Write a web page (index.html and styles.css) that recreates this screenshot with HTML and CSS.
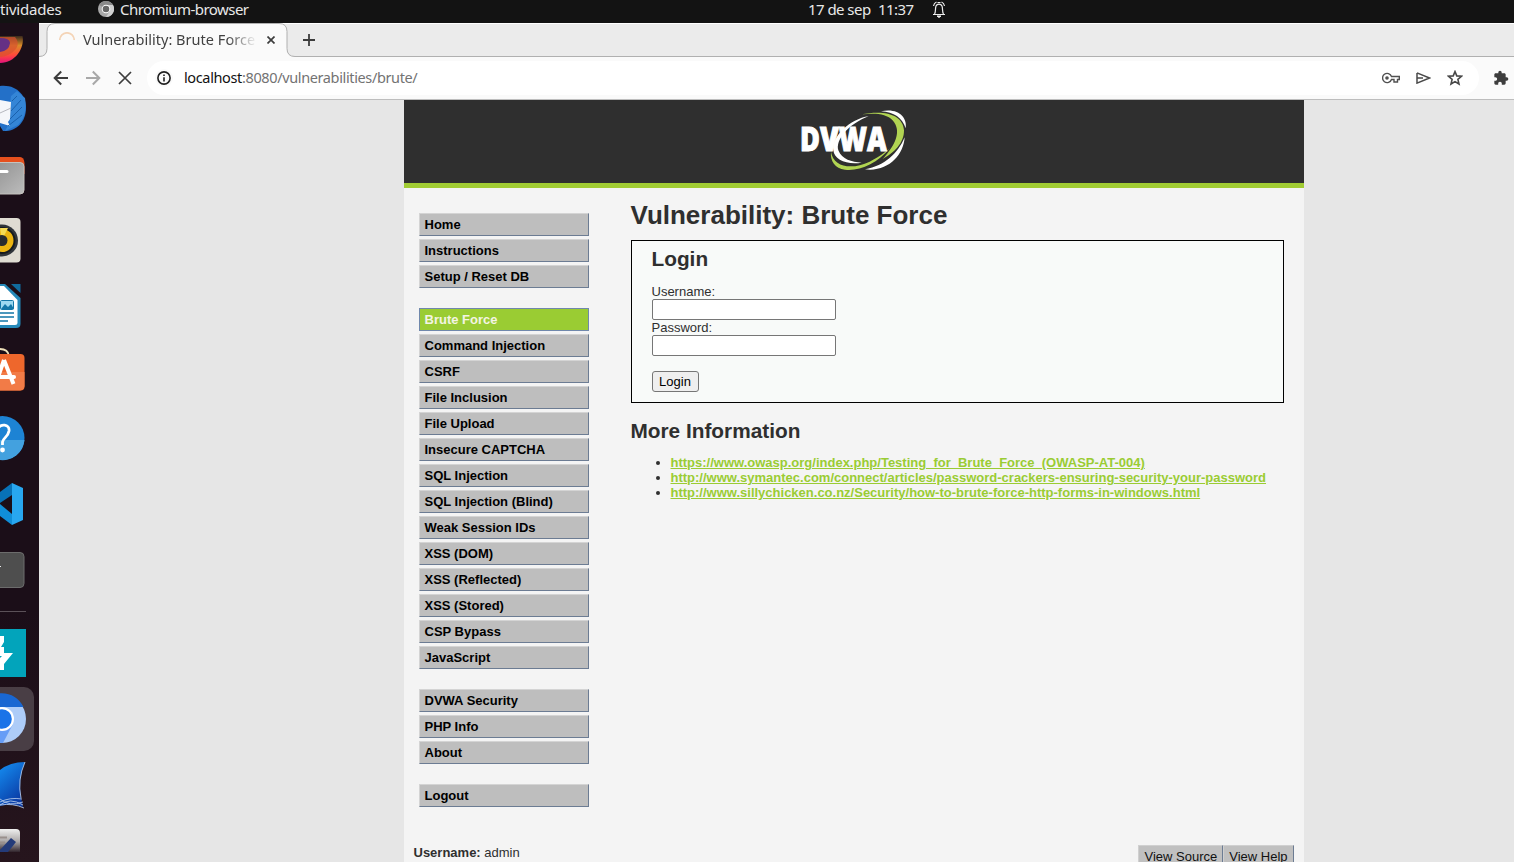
FILE: index.html
```
<!DOCTYPE html>
<html lang="es">
<head>
<meta charset="utf-8">
<title>Vulnerability: Brute Force</title>
<link rel="stylesheet" href="styles.css">
</head>
<body>
<div class="desktop">
  <div class="topbar">
    <span class="activities">tividades</span>
    <svg class="app-icon" width="16" height="16" viewBox="0 0 16 16"><circle cx="8" cy="8" r="8" fill="#a9a9a9"/><path d="M8 8L1 4A8 8 0 0 1 15 4Z" fill="#8a8a8a"/><path d="M8 16A8 8 0 0 0 15 4H8L12 10Z" fill="#d0d0d0"/><circle cx="8" cy="8" r="4.3" fill="#fff"/><circle cx="8" cy="8" r="3.3" fill="#666"/></svg>
    <span class="app-name">Chromium-browser</span>
    <span class="clock-date">17 de sep</span>
    <span class="clock-time">11:37</span>
    <svg class="bell" width="14" height="18" viewBox="0 0 14 18" fill="none" stroke="#eee"><path d="M1 14.500H13M2.500 14C4 12 3 9 4 6C5 3.500 9 3.500 10 6C11 9 10 12 11.500 14M1.500 6Q2 3 4.500 2M12.500 6Q12 3 9.500 2M5.500 2.500H8.500" stroke-width="1.200"/><path d="M5 16H9L7 17.500Z" fill="#fff"/></svg>
  </div>
  <div class="workspace">
    <div class="dock">
      <svg class="slot slot-first" viewBox="0 13 39 53"><defs><linearGradient id="ff" x1="0" y1="0" x2="0" y2="1"><stop offset="0" stop-color="#3b2b1d"/><stop offset=".35" stop-color="#d98b28"/><stop offset=".7" stop-color="#ff4a3a"/><stop offset="1" stop-color="#e5127d"/></linearGradient></defs><path d="M0 26H22.500C25 38 15 53 0 53Z" fill="url(#ff)"/><path d="M0 27H15C23 36 12 46 0 47Z" fill="#d9512f" opacity=".7"/><path d="M0 28Q10 28 10 33Q9 41 0 42Z" fill="#653085"/></svg>
      <svg class="slot" viewBox="0 0 39 66"><path d="M0 10C17 8 26 20 26 32C26 47 15 56 3 55L0 50Z" fill="#2370c8"/><path d="M11 20L17 15L25 22Q28 39 18 49L5 55L10 46L8 44Z" fill="#3485d6"/><path d="M0 24L11 26L10 43L8 46L10 50L0 47Z" fill="#f5f6fa"/><path d="M0 37L11 32" stroke="#a6a7ae" stroke-width=".8"/><path d="M12 25L17 20M11 35L21 24M10 43L22 31M8 50L22 39" stroke="#1960ac" stroke-width="1"/></svg>
      <svg class="slot" viewBox="0 0 39 66"><defs><linearGradient id="fg" x1="0" y1="0" x2="1" y2="1"><stop stop-color="#8d8d8d"/><stop offset="1" stop-color="#bcbcbc"/></linearGradient></defs><path d="M0 15H20Q24 15 24.500 21V32H0Z" fill="#e6501e"/><rect x="-12" y="20.500" width="36" height="31.500" rx="4" fill="url(#fg)" stroke="#c5c2be"/><path d="M0 29.500H7" stroke="#fff" stroke-width="3" stroke-linecap="round"/></svg>
      <svg class="slot" viewBox="0 0 39 66"><rect x="-18" y="10" width="38.500" height="44.500" rx="4" fill="#dfdcd2"/><circle cx="2" cy="32.500" r="16" fill="#30353a"/><circle cx="2" cy="32.500" r="12.500" fill="#ecb511" stroke="#161b1e" stroke-width="2"/><path d="M2 32L0 20H8Z" fill="#f7dc54"/><circle cx="2" cy="32.500" r="5.500" fill="#292c2e"/></svg>
      <svg class="slot" viewBox="0 0 39 66"><path d="M0 10H5L20.500 24V50Q20.500 54 16 54H0Z" fill="#2589b9"/><path d="M0 12H4L17.500 26V49Q17.500 51 15 51H0Z" fill="#fff"/><path d="M11 10H20.500V19Z" fill="#116b9d"/><rect x=".5" y="26.500" width="13" height="9" rx="1" fill="#9bd8f0" stroke="#1276a7"/><path d="M1 35L5 30L8 33L11 30L14 35Z" fill="#1276a7"/><path d="M0 39H14M0 43H14M0 47H8" stroke="#1276a7" stroke-width="1.700"/></svg>
      <svg class="slot" viewBox="0 0 39 66"><path d="M0 9Q8 9 9 16" fill="none" stroke="#eee0b9" stroke-width="1.800"/><rect x="-15" y="14" width="39.500" height="36.500" rx="4" fill="#ee672c"/><path d="M0 32H24.500V46Q24 50 20 50.500H0Z" fill="#f27b47"/><path d="M4 20L13.500 44M4 20L-3 40" stroke="#fff" stroke-width="4"/><path d="M0 37H14" stroke="#fff" stroke-width="4" stroke-linecap="round"/></svg>
      <svg class="slot" viewBox="0 0 39 66"><circle cx="2.500" cy="32" r="22" fill="#1d83d4"/><path d="M0 34H24.500A22 22 0 0 1 0 54Z" fill="#43a1df"/><path d="M-2 23C0 17 10 18 9 25C8 31 3 32 2.500 36V39" fill="none" stroke="#fff" stroke-width="2.800"/><circle cx="2.500" cy="44" r="2.400" fill="#fff"/></svg>
      <svg class="slot" viewBox="0 0 39 66"><path d="M12 11L0 20V31L12 23Z" fill="#0872b7"/><path d="M0 32L12 42V53L0 44Z" fill="#108ed8"/><path d="M12 11L23 16V48L12 53Z" fill="#28a7f0"/></svg>
      <svg class="slot" viewBox="0 0 39 66"><rect x="-14" y="14.500" width="38" height="35" rx="4" fill="#4e4e4e" stroke="#6c6c6c"/><path d="M0 28.500H1" stroke="#eee"/></svg>
      <div class="dock-line"></div>
      <svg class="slot" viewBox="0 0 39 66"><path d="M0 9H26V57H0Z" fill="#02a4bb"/><path d="M0 16H4V22L1 27H4V33H13L4 44V50H0V38L2 36H0Z" fill="#fff"/></svg>
      <svg class="slot" viewBox="0 0 39 66"><rect x="-20" y="1" width="54" height="64" rx="10" fill="#493e45"/><circle cx="2" cy="33" r="24" fill="#adccf8"/><path d="M-20 21A24 24 0 0 1 23.500 21Z" fill="#1967d2"/><path d="M0 43L13 38L3 57H0Z" fill="#669df6"/><circle cx="2" cy="33" r="12" fill="#fff"/><circle cx="2" cy="33" r="9.800" fill="#1a73e8"/></svg>
      <svg class="slot" viewBox="0 0 39 66"><defs><linearGradient id="ws" x1="0" y1="0" x2=".5" y2="1"><stop stop-color="#1590f4"/><stop offset="1" stop-color="#0a3ba5"/></linearGradient></defs><path d="M0 18Q10 10 25 10Q18 25 21 46L23 55Q12 51 0 54Z" fill="url(#ws)"/><path d="M25 10Q17 28 21 46M0 50Q10 45 22 47M0 53Q10 45 23 53M0 47Q9 55 23 50M0 53Q13 51 24 56" fill="none" stroke="#c2d3ef" stroke-width=".8"/></svg>
      <svg class="slot slot-last" viewBox="0 0 39 44"><defs><linearGradient id="ed" x1="0" y1="0" x2="0" y2="1"><stop stop-color="#f0f0ef"/><stop offset=".55" stop-color="#aaa6a6"/><stop offset="1" stop-color="#30242c"/></linearGradient></defs><path d="M0 11H16Q20 11 20 15V34H0Z" fill="url(#ed)"/><path d="M0 19.500H7M0 24.500H5" stroke="#99908c" stroke-width="2"/><path d="M0 32L11 20L16 24L8 34H0Z" fill="#243b79"/></svg>
    </div>
    <div class="browser">
      <div class="tabstrip">
        <svg class="tab-shape" width="257" height="34" viewBox="0 0 257 34"><path d="M0 34V33.500Q8 33.500 8 25.500V8.500Q8 .5 16 .5H240Q248 .5 248 8.500V25.500Q248 33.500 256 33.500V34Z" fill="#fafafa"/><path d="M0 33.500Q8 33.500 8 25.500V8.500Q8 .5 16 .5H240Q248 .5 248 8.500V25.500Q248 33.500 256 33.500" fill="none" stroke="#b0b0b0"/></svg>
        <svg class="spinner" width="16" height="16" viewBox="0 0 16 16"><path d="M.8 8A7.200 7.200 0 0 1 15.200 8" fill="none" stroke="#f4d4b7" stroke-width="1.700"/></svg>
        <span class="tab-title">Vulnerability: Brute Force</span>
        <svg class="tab-close" width="8" height="8" viewBox="0 0 8 8"><path d="M.5 .5L7.500 7.500M7.500 .5L.5 7.500" stroke="#3d3d3d" stroke-width="1.700"/></svg>
        <svg class="tab-new" width="12" height="12" viewBox="0 0 12 12"><path d="M6 0V12M0 6H12" stroke="#3c3c3c" stroke-width="1.800"/></svg>
      </div>
      <div class="toolbar">
        <svg class="nav-icon" viewBox="0 0 16 16"><path d="M15 8H2M8.200 1.500L1.700 8L8.200 14.500" fill="none" stroke="#3d3d3d" stroke-width="2"/></svg>
        <svg class="nav-icon" viewBox="0 0 16 16"><path d="M1 8H14M7.800 1.500L14.300 8L7.800 14.500" fill="none" stroke="#a8a8a8" stroke-width="2"/></svg>
        <svg class="nav-icon nav-stop" viewBox="0 0 16 16"><path d="M2 2L14 14M14 2L2 14" stroke="#3d3d3d" stroke-width="1.700"/></svg>
        <div class="omnibox">
          <span class="info-wrap"><svg width="14" height="14" viewBox="0 0 14 14"><circle cx="7" cy="7" r="6.100" fill="none" stroke="#202020" stroke-width="1.600"/><path d="M7 6.200V10.500M7 3.500V5" stroke="#202020" stroke-width="1.600"/></svg></span>
          <span class="url"><b>localhost</b>:8080/vulnerabilities/brute/</span>
          <svg class="key" width="18" height="12" viewBox="0 0 18 12"><path d="M9.500 4.500A4.600 4.600 0 1 0 9.500 7.500H12V10H15.500V7.500H17.300V4.500Z" fill="none" stroke="#505050" stroke-width="1.400"/><circle cx="5" cy="6" r="1.800" fill="#505050"/></svg>
          <svg class="send" width="15" height="12" viewBox="0 0 15 12"><path d="M1 .9L13.500 6L1 11.100V.9M1 6H7" fill="none" stroke="#4a4a4a" stroke-width="1.500"/></svg>
          <svg class="star" width="16" height="16" viewBox="0 0 16 16"><path d="M8 1.600L9.800 5.900L14.500 6.300L10.900 9.400L12 14L8 11.600L4 14L5.100 9.400L1.500 6.300L6.200 5.900Z" fill="none" stroke="#484848" stroke-width="1.600"/></svg>
        </div>
        <svg class="puzzle" width="16" height="16" viewBox="0 0 24 24"><path d="M20.500 11H19V7c0-1.100-.9-2-2-2h-4V3.500a2.500 2.500 0 0 0-5 0V5H4c-1.100 0-2 .9-2 2v3.800h1.500c1.500 0 2.700 1.200 2.700 2.700s-1.200 2.700-2.700 2.700H2V20c0 1.100.9 2 2 2h3.800v-1.500c0-1.500 1.200-2.700 2.700-2.700s2.700 1.200 2.700 2.700V22H17c1.100 0 2-.9 2-2v-4h1.500a2.500 2.500 0 0 0 0-5z" fill="#3d3d3d"/></svg>
      </div>
      <div class="viewport">
        <div class="container">
          <header class="header">
            <svg class="logo" viewBox="-78 300 600 249" width="200" height="83">
              <path d="M303 334C355 322 383 353 377 385C367 353 342 337 303 334Z" fill="#fff"/>
              <path d="M374 412C371 465 324 517 255 508C315 498 355 458 374 412Z" fill="#fff"/>
              <path d="M266 349C204 373 166 420 175 451C186 479 215 486 245 488C201 495 162 480 160 450C154 412 210 356 266 349Z" fill="#fff"/>
              <path d="M244 343C315 329 369 344 372 391C373 429 341 460 308 477C347 434 365 393 339 362C318 340 287 339 244 343Z" fill="#b1d452"/>
              <path d="M153 455C160 501 214 511 269 485C298 470 317 456 329 445C292 492 238 514 195 509C165 505 150 483 153 455Z" fill="#b1d452"/>
              <text class="logo-text logo-outline" x="60" y="454" textLength="260" lengthAdjust="spacingAndGlyphs">DVWA</text>
            </svg>
          </header>
          <div class="columns">
            <nav class="menu">
              <ul><li>Home</li><li>Instructions</li><li>Setup / Reset DB</li></ul>
              <ul><li class="selected">Brute Force</li><li>Command Injection</li><li>CSRF</li><li>File Inclusion</li><li>File Upload</li><li>Insecure CAPTCHA</li><li>SQL Injection</li><li>SQL Injection (Blind)</li><li>Weak Session IDs</li><li>XSS (DOM)</li><li>XSS (Reflected)</li><li>XSS (Stored)</li><li>CSP Bypass</li><li>JavaScript</li></ul>
              <ul><li>DVWA Security</li><li>PHP Info</li><li>About</li></ul>
              <ul><li>Logout</li></ul>
            </nav>
            <main class="main">
              <h1>Vulnerability: Brute Force</h1>
              <form class="login-box">
                <h2>Login</h2>
                <label for="user">Username:</label>
                <input id="user" type="text">
                <label for="pass">Password:</label>
                <input id="pass" type="password">
                <button type="button">Login</button>
              </form>
              <h2>More Information</h2>
              <ul class="links">
                <li><a href="#">https://www.owasp.org/index.php/Testing_for_Brute_Force_(OWASP-AT-004)</a></li>
                <li><a href="#">http://www.symantec.com/connect/articles/password-crackers-ensuring-security-your-password</a></li>
                <li><a href="#">http://www.sillychicken.co.nz/Security/how-to-brute-force-http-forms-in-windows.html</a></li>
              </ul>
            </main>
          </div>
          <footer class="footer">
            <div><b>Username:</b> admin</div>
            <div class="footer-buttons"><span>View Source</span><span>View Help</span></div>
          </footer>
        </div>
      </div>
    </div>
  </div>
</div>
</body>
</html>
```
FILE: styles.css
```
* { box-sizing: border-box; }
body { margin: 0; overflow: hidden; background: #e6e6e6; }
svg { display: block; flex: none; }
ul { margin: 0; padding: 0; list-style: none; }

.desktop { width: 1514px; height: 862px; display: flex; flex-direction: column; overflow: hidden; }
.topbar {
  height: 23px; flex: none; display: flex; align-items: flex-start;
  background: #131313; color: #e8e8e8;
  font: 15px/19px "Noto Sans", sans-serif; white-space: nowrap;
}
.activities { width: 98px; letter-spacing: -0.2px; }
.app-icon { margin-top: 1px; }
.app-name { width: 688px; margin-left: 6px; letter-spacing: -0.55px; }
.clock-date { width: 70px; letter-spacing: -0.55px; line-height: 18px; }
.clock-time { width: 54px; letter-spacing: -0.55px; line-height: 18px; }
.workspace { flex: 1; min-height: 0; display: flex; }

.dock { width: 39px; flex: none; background: linear-gradient(#1b0e18, #1b0e18 70%, #26151d); overflow: hidden; }
.slot { width: 39px; height: 66px; }
.slot-first { height: 53px; }
.slot-last { height: 44px; }
.dock-line { width: 26px; height: 1px; margin: 7px 0 8px; background: #5b5158; }

.browser { flex: 1; min-width: 0; display: flex; flex-direction: column; }
.tabstrip {
  height: 34px; flex: none; display: flex; align-items: center; position: relative;
  background: #ebebeb; border-top: 1px solid #fff; border-bottom: 1px solid #b0b0b0;
}
.tab-shape { position: absolute; left: 0; top: -1px; }
.spinner, .tab-title, .tab-close { position: relative; }
.spinner { margin-left: 20px; }
.tab-title {
  width: 174px; margin: 0 0 2px 8px; overflow: hidden; white-space: nowrap;
  font: 14.500px/20px "Noto Sans", sans-serif; letter-spacing: 0.03px; color: #414141;
  -webkit-mask-image: linear-gradient(90deg, #000 144px, transparent 174px);
  mask-image: linear-gradient(90deg, #000 144px, transparent 174px);
}
.tab-close { margin-left: 10px; }
.tab-new { margin-left: 28px; }
.toolbar {
  height: 43px; flex: none; display: flex; align-items: center;
  background: #fafafa; border-bottom: 1px solid #bdbdbd; padding-left: 14px;
}
.nav-icon { width: 16px; height: 16px; margin-right: 16px; }
.nav-stop { margin-right: 14px; }
.omnibox {
  width: 1332px; height: 34px; flex: none; border-radius: 17px; background: #fff;
  display: flex; align-items: center; padding-left: 8px;
}
.info-wrap { width: 18px; height: 18px; border-radius: 50%; background: #fafafa; display: grid; place-items: center; }
.url { flex: 1; margin: 0 0 2px 11px; font: 14.500px/20px "Noto Sans", sans-serif; letter-spacing: -0.37px; color: #737373; }
.url b { font-weight: 400; color: #111; }
.send { margin-left: 16px; }
.star { margin: 0 16px 0 16px; }
.puzzle { margin-left: 14px; }

.viewport { flex: 1; min-height: 0; background: #e6e6e6; padding-left: 364.5px; overflow: hidden; font: 13px/15px "Liberation Sans", Arial, sans-serif; color: #2f2f2f; }
.container { width: 900px; height: 800px; background: #f4f4f4; }
.header { height: 88px; background: #2f2f2f; border-bottom: 5px solid #a1cc33; display: flex; justify-content: center; }
.logo-text { font: 800 99px "Open Sans", sans-serif; fill: #fff; }
.logo-outline { stroke: #fff; stroke-width: 3px; }
.columns { height: 657px; display: flex; }
.menu { width: 227px; padding: 25px 0 0 15px; }
.menu ul { margin-bottom: 20px; }
.menu li {
  width: 170px; height: 23px; margin-bottom: 3px; padding: 3px 4px 0 5px;
  font-weight: 700; color: #000; background: #bebebe;
  border: 1px solid; border-color: #d4d4d4 #6c7c93 #6c7c93 #d4d4d4;
}
.menu li:last-child { margin-bottom: 0; }
.menu li.selected { background: #9acc33; color: #f4f4e4; border-color: #7088ac; }
.main { width: 653px; padding-top: 12px; }
h1, h2 { margin: 0; color: #2f2f2f; }
h1 { font-size: 26px; line-height: 30px; }
h2 { font-size: 20.800px; line-height: 24px; }
.login-box {
  height: 163px; margin: 10px 0 16px; padding: 6px 20px 0; display: flex; flex-direction: column; align-items: flex-start;
  background: #f8faf9; border: 1px solid #000;
}
.login-box h2 { margin-bottom: 13px; }
.login-box input { width: 184px; height: 21px; border: 1px solid #767676; border-radius: 2px; padding: 1px 2px; background: #fff; }
.login-box button {
  width: 47px; height: 21px; margin-top: 15px; padding: 0; border: 1px solid #767676; border-radius: 3px;
  background: #efefef; color: #000; font: 13px/15px "Liberation Sans", Arial, sans-serif;
}
.links { list-style: disc; padding-left: 40px; margin-top: 12px; }
.links a { color: #9acc33; font-weight: 700; white-space: nowrap; }
.footer { display: flex; justify-content: space-between; padding: 0 10px; }
.footer-buttons { display: flex; }
.footer-buttons span {
  height: 23px; padding: 3px 5px; background: #c0c0c0; color: #111;
  border: 1px solid; border-color: #d0d0d0 #6c7c93 #6c7c93 #d0d0d0;
}
```
